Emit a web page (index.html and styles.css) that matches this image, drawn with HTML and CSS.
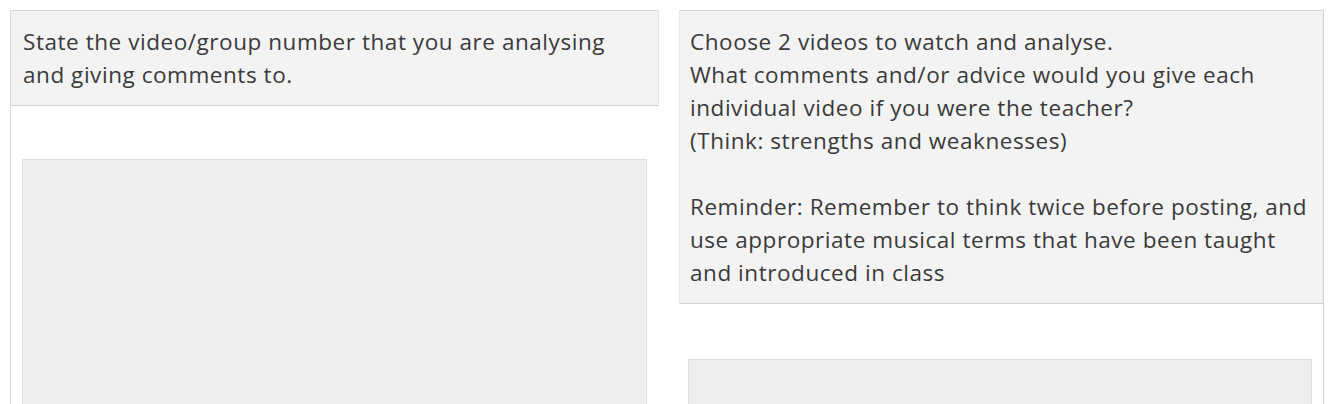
FILE: index.html
```html
<!DOCTYPE html>
<html>
<head>
<meta charset="utf-8">
<link rel="stylesheet" href="styles.css">
</head>
<body>
<div class="row">
  <div class="card card-left">
    <div class="prompt">State the video/group number that you are analysing<br>and giving comments to.</div>
    <div class="body"><div class="input"></div></div>
  </div>
  <div class="card card-right">
    <div class="prompt">Choose 2 videos to watch and analyse.<br>What comments and/or advice would you give each<br>individual video if you were the teacher?<br>(Think: strengths and weaknesses)<br><br>Reminder: Remember to think twice before posting, and<br>use appropriate musical terms that have been taught<br>and introduced in class</div>
    <div class="body"><div class="input"></div></div>
  </div>
</div>
</body>
</html>
```
FILE: styles.css
```css
html, body {
  margin: 0;
  padding: 0;
  background: #ffffff;
  height: 404px;
  overflow: hidden;
}
body {
  font-family: "Open Sans", "Noto Sans", sans-serif;
  color: #3a3a3a;
}
.row {
  display: flex;
  gap: 20px;
  padding: 10px 12px 0 10px;
  align-items: flex-start;
}
.card {
  display: flex;
  flex-direction: column;
  border-top: 1px solid #d8d8d8;
}
.card-left {
  width: 648px;
  border-left: 1px solid #d8d8d8;
}
.card-right {
  flex: 1;
  border-right: 1px solid #d0d0d0;
}
.prompt {
  background: #f3f3f3;
  font-size: 22.5px;
  letter-spacing: 0.55px;
  line-height: 33px;
  padding: 14px 12px 14px 12px;
  border-bottom: 1px solid #cfcfcf;
  border-right: 1px solid #e2e2e2;
  white-space: nowrap;
}
.card-right .prompt {
  padding-left: 10px;
  border-left: 1px solid #e8e8e8;
  border-right: none;
}
.body {
  padding: 53px 12px 0 11px;
  height: 400px;
}
.card-right .body {
  padding: 55px 11px 0 9px;
}
.input {
  background: #eeeeee;
  border: 1px solid #e0e0e0;
  height: 300px;
}
```
